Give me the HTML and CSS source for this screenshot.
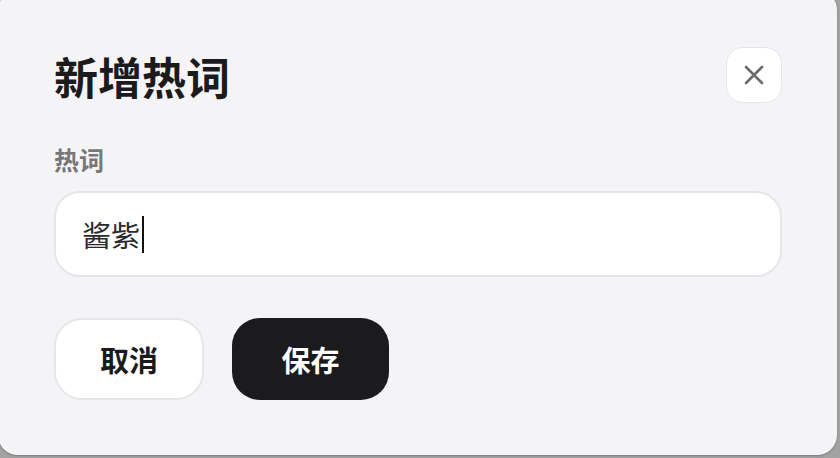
FILE: index.html
```html
<!DOCTYPE html>
<html lang="zh-CN">
<head>
<meta charset="utf-8">
<title>新增热词</title>
<link rel="stylesheet" href="styles.css">
</head>
<body>
<div class="dialog">
  <div class="header">
    <h1 class="title">新增热词</h1>
    <button class="close" aria-label="关闭">
      <svg width="20" height="20" viewBox="0 0 20 20"><path d="M2 2 L18 18 M18 2 L2 18" stroke="#6b6b6d" stroke-width="2.6" stroke-linecap="round" fill="none"/></svg>
    </button>
  </div>
  <label class="label">热词</label>
  <div class="input"><span class="value">酱紫</span><span class="caret"></span></div>
  <div class="actions">
    <button class="btn btn-cancel">取消</button>
    <button class="btn btn-save">保存</button>
  </div>
</div>
</body>
</html>
```
FILE: styles.css
```css
html, body {
  margin: 0;
  padding: 0;
  height: 100%;
  overflow: hidden;
}
body {
  background: #a2a2a2;
  font-family: "Noto Sans CJK SC", "Noto Sans", sans-serif;
}
.dialog {
  box-sizing: border-box;
  width: 839px;
  height: 465px;
  margin: -10px 0 0 -2px;
  background: #f4f4f6;
  border-radius: 20px;
  box-shadow: 0 1px 2px rgba(0,0,0,0.25);
  padding: 57px 55px 0 56px;
  display: flex;
  flex-direction: column;
}
.header {
  display: flex;
  align-items: center;
  justify-content: space-between;
  height: 56px;
}
.title {
  margin: 0;
  font-size: 44px;
  line-height: 1;
  font-weight: 700;
  color: #1b1b1d;
  position: relative;
  top: 1px;
}
.close {
  box-sizing: border-box;
  width: 56px;
  height: 56px;
  border-radius: 17px;
  background: #ffffff;
  border: 1.5px solid #e6e6ea;
  display: flex;
  align-items: center;
  justify-content: center;
  padding: 0;
}
.label {
  margin-top: 43px;
  font-size: 25px;
  line-height: 26px;
  font-weight: 700;
  color: #77777a;
}
.input {
  box-sizing: border-box;
  margin-top: 19px;
  height: 86px;
  background: #ffffff;
  border: 2px solid #e6e6ea;
  border-radius: 26px;
  display: flex;
  align-items: center;
  padding-left: 26px;
}
.value {
  font-size: 29px;
  line-height: 1;
  color: #2a2a2c;
}
.caret {
  display: inline-block;
  width: 2px;
  height: 37px;
  background: #111;
  margin-left: 2px;
}
.actions {
  display: flex;
  gap: 28px;
  margin-top: 41px;
}
.btn {
  box-sizing: border-box;
  height: 82px;
  border-radius: 28px;
  font-family: "Noto Sans CJK SC", "Noto Sans", sans-serif;
  font-size: 29px;
  font-weight: 700;
  line-height: 1;
  padding: 0;
  cursor: pointer;
}
.btn-cancel {
  width: 150px;
  background: #ffffff;
  color: #1b1b1d;
  border: 2px solid #e6e6ea;
}
.btn-save {
  width: 157px;
  background: #1b1b1d;
  color: #ffffff;
  border: none;
}
```
